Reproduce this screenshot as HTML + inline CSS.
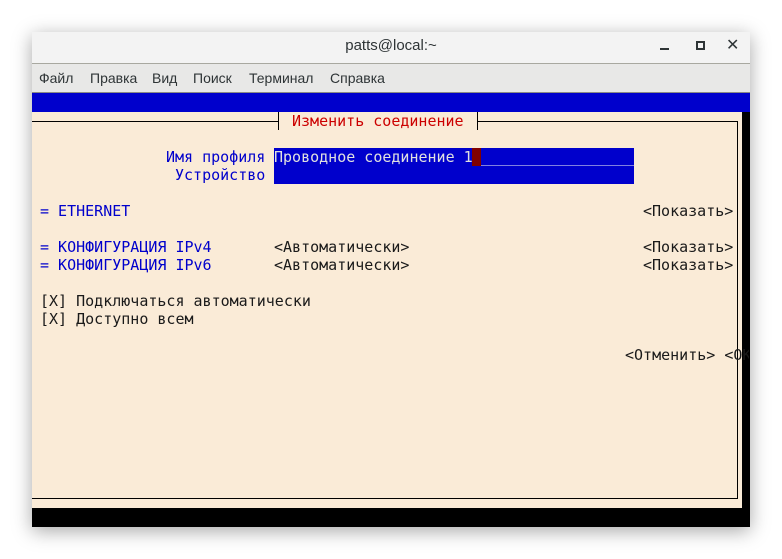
<!DOCTYPE html>
<html><head><meta charset="utf-8"><style>
body{margin:0;width:782px;height:559px;background:#fff;position:relative;overflow:hidden;font-family:"Liberation Sans","DejaVu Sans",sans-serif}
.win{position:absolute;left:32px;top:32px;width:718px;height:495px;box-shadow:0 4px 18px rgba(0,0,0,.35);background:#000}
.title{position:absolute;left:0;top:0;width:718px;height:31px;background:#f3f3f3;border-bottom:1px solid #a8a8a0;text-align:center;line-height:28px;font-size:15px;color:#2e3436}
.menu{position:absolute;left:0;top:32px;width:718px;height:28px;background:#e8e8e7;border-bottom:1px solid #8a8a85;font-size:14px;color:#2e3436}
.menu span{position:absolute;top:6px}
.t{position:absolute;font-family:"DejaVu Sans Mono",monospace;font-size:15px;line-height:18px;white-space:pre}
.b{color:#0000cc}.k{color:#1a1a1a}.r{color:#cc0000}
.abs{position:absolute}
</style></head><body>
<div class="win">
<div class="title">patts@local:~</div>
<div class="abs" style="left:628px;top:16px;width:9px;height:2px;background:#2e3436"></div>
<div class="abs" style="left:664px;top:9px;width:5px;height:5px;border:2px solid #2e3436"></div>
<div class="abs" style="left:694px;top:3px;font-size:16px;color:#2e3436;font-weight:bold">✕</div>
<div class="menu"><span style="left:7px">Файл</span><span style="left:58px">Правка</span><span style="left:120px">Вид</span><span style="left:161px">Поиск</span><span style="left:217px">Терминал</span><span style="left:298px">Справка</span></div>
<div class="abs" style="left:0;top:61px;width:718px;height:19px;background:#0000cc"></div>
<div class="abs" style="left:0;top:80px;width:710px;height:396px;background:#faebd7"></div>
<div class="abs" style="left:710px;top:98px;width:8px;height:378px;background:#000"></div>
</div>
<div class="abs" style="left:32px;top:121px;width:246px;height:1px;background:#000"></div>
<div class="abs" style="left:278px;top:112px;width:1px;height:18px;background:#000"></div>
<div class="abs" style="left:477px;top:112px;width:1px;height:18px;background:#000"></div>
<div class="abs" style="left:477px;top:121px;width:261px;height:1px;background:#000"></div>
<div class="abs" style="left:737px;top:121px;width:1px;height:378px;background:#000"></div>
<div class="abs" style="left:32px;top:498px;width:706px;height:1px;background:#000"></div>
<div class="t r" style="left:292px;top:112px">Изменить соединение</div>
<div class="abs" style="left:274px;top:148px;width:360px;height:36px;background:#0000cc"></div>
<div class="abs" style="left:472px;top:148px;width:9px;height:18px;background:#800000"></div>
<div class="abs" style="left:481px;top:165px;width:153px;height:1px;background:#8080e0"></div>
<div class="t" style="left:274px;top:148px;color:#e0e0e0">Проводное соединение 1</div>
<div class="t b" style="left:166px;top:148px">Имя профиля</div>
<div class="t b" style="left:175px;top:166px">Устройство</div>
<div class="t b" style="left:40px;top:202px">= ETHERNET</div>
<div class="t k" style="left:643px;top:202px">&lt;Показать&gt;</div>
<div class="t b" style="left:40px;top:238px">= КОНФИГУРАЦИЯ IPv4</div>
<div class="t k" style="left:274px;top:238px">&lt;Автоматически&gt;</div>
<div class="t k" style="left:643px;top:238px">&lt;Показать&gt;</div>
<div class="t b" style="left:40px;top:256px">= КОНФИГУРАЦИЯ IPv6</div>
<div class="t k" style="left:274px;top:256px">&lt;Автоматически&gt;</div>
<div class="t k" style="left:643px;top:256px">&lt;Показать&gt;</div>
<div class="t k" style="left:40px;top:292px">[X] Подключаться автоматически</div>
<div class="t k" style="left:40px;top:310px">[X] Доступно всем</div>
<div class="abs" style="left:620px;top:346px;width:129px;height:18px;overflow:hidden;z-index:5"><div class="t k" style="left:5px;top:0">&lt;Отменить&gt; &lt;OK&gt;</div></div>
</body></html>
